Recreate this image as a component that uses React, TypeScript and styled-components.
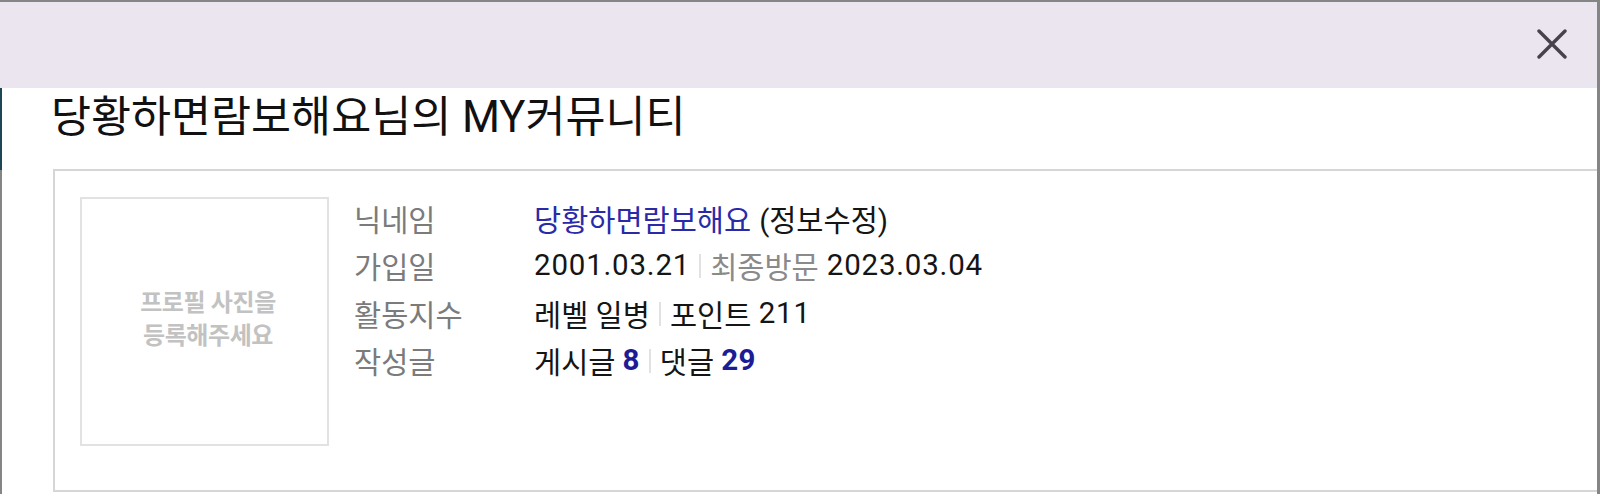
import { createGlobalStyle, styled } from 'styled-components';

const Global = createGlobalStyle`
  html, body {
    margin: 0;
    padding: 0;
    background: #ffffff;
  }
  body {
    font-family: Roboto, "Noto Sans CJK KR", sans-serif;
  }
`

const Frame = styled.div`
  width: 1600px;
  height: 494px;
  box-sizing: border-box;
  border-top: 2px solid #858585;
  border-right: 3px solid #858585;
  overflow: hidden;
  display: flex;
  flex-direction: column;
`
const Header = styled.div`
  height: 86px;
  flex-shrink: 0;
  background-color: #ebe5f0;
  display: flex;
  align-items: center;
  justify-content: flex-end;
  padding-right: 27px;
`
const CloseButton = styled.button`
  width: 36px;
  height: 36px;
  padding: 0;
  margin-top: -2px;
  border: none;
  background: none;
  display: flex;
  align-items: center;
  justify-content: center;
  cursor: pointer;
`
const Body = styled.div`
  flex: 1;
  display: flex;
`
// the page behind the dialog peeks out on the left edge
const Edge = styled.div`
  width: 2px;
  flex-shrink: 0;
  background: linear-gradient(#1d4657 0 82px, #858585 82px);
`
const Content = styled.div`
  flex: 1;
  display: flex;
  flex-direction: column;
  min-width: 0;
`
const Title = styled.h1`
  margin: 6px 0 27px 49px;
  font-size: 43.5px;
  line-height: 48px;
  font-weight: 400;
  color: #111;
`
const Card = styled.div`
  margin-left: 51px;
  height: 323px;
  box-sizing: border-box;
  border: 2px solid #d6d6d6;
  border-right: none;
  padding: 26px 0 0 25px;
  display: flex;
  align-items: flex-start;
  gap: 25px;
`
const Photo = styled.div`
  width: 249px;
  height: 249px;
  box-sizing: border-box;
  border: 2px solid #e2e2e2;
  display: flex;
  flex-direction: column;
  align-items: center;
  justify-content: center;
  padding-left: 7px;
  padding-bottom: 4px;
  color: #c2c2c2;
  font-size: 24px;
  line-height: 33px;
  font-weight: 700;
  letter-spacing: -0.4px;
`
const Info = styled.div`
  margin-top: -3px;
  display: grid;
  grid-template-columns: 180px auto;
  grid-auto-rows: 47.5px;
  align-items: center;
  font-size: 29.5px;
`
const Label = styled.div`
  color: #7b7b7b;
`
const Value = styled.div`
  display: flex;
  align-items: center;
  color: #151515;
  white-space: nowrap;
`
const Nick = styled.span`
  color: #2a2aa8;
  margin-right: 8px;
`
const Num = styled.span`
  letter-spacing: 0.8px;
`
const Muted = styled.span`
  color: #8a8a8a;
  margin-right: 8px;
`
const Count = styled.b`
  color: #1c1c96;
  font-weight: 700;
  margin-left: 7px;
  letter-spacing: 0.5px;
`
const Sep = styled.span`
  display: inline-block;
  width: 2px;
  height: 24px;
  background-color: #e2e2e2;
  margin: 2px 9px 0 9px;
`

export default function App() {
  return (
    <>
      <Global />
      <Frame>
        <Header>
          <CloseButton aria-label="닫기">
            <svg width="30" height="30" viewBox="0 0 30 30">
              <path d="M2 2L28 28M28 2L2 28" stroke="#47434d" strokeWidth="3.4" strokeLinecap="round" />
            </svg>
          </CloseButton>
        </Header>
        <Body>
          <Edge />
          <Content>
            <Title>당황하면람보해요님의 MY커뮤니티</Title>
            <Card>
              <Photo>
                <span>프로필 사진을</span>
                <span>등록해주세요</span>
              </Photo>
              <Info>
                <Label>닉네임</Label>
                <Value>
                  <Nick>당황하면람보해요</Nick>(정보수정)
                </Value>
                <Label>가입일</Label>
                <Value>
                  <Num>2001.03.21</Num><Sep /><Muted>최종방문</Muted><Num>2023.03.04</Num>
                </Value>
                <Label>활동지수</Label>
                <Value>
                  레벨 일병<Sep />포인트&nbsp;<Num>211</Num>
                </Value>
                <Label>작성글</Label>
                <Value>
                  게시글<Count>8</Count><Sep />댓글<Count>29</Count>
                </Value>
              </Info>
            </Card>
          </Content>
        </Body>
      </Frame>
    </>
  )
}
